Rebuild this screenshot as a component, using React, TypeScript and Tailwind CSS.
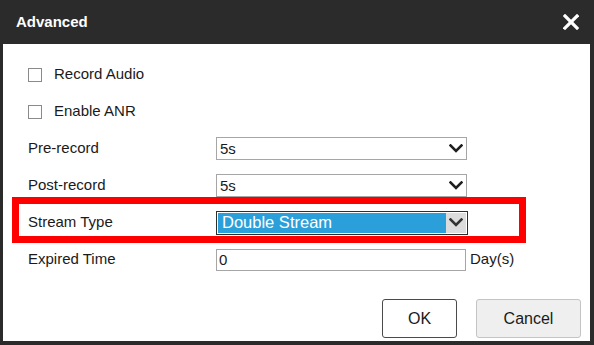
import React from 'react'

const Chevron = ({ color = '#1f1f1f' }: { color?: string }) => (
  <svg width="14" height="9" viewBox="0 0 14 9" className="shrink-0">
    <polyline
      points="1.5,1.5 7,7 12.5,1.5"
      fill="none"
      stroke={color}
      strokeWidth="2.6"
      strokeLinecap="square"
    />
  </svg>
)

const CloseIcon = () => (
  <svg width="16" height="16" viewBox="0 0 16 16">
    <line x1="2" y1="2" x2="14" y2="14" stroke="#fff" strokeWidth="3.2" strokeLinecap="square" />
    <line x1="14" y1="2" x2="2" y2="14" stroke="#fff" strokeWidth="3.2" strokeLinecap="square" />
  </svg>
)

/**
 * Checkbox row, e.g. Record Audio
 */
const CheckRow = ({ label }: { label: string }) => (
  <div className="h-[37px] flex items-center">
    <span className="w-[14px] h-[14px] border border-[#8a8a8a] bg-white" />
    <span className="ml-[12px] text-[15px] text-[#1a1a1a]">{label}</span>
  </div>
)

/**
 * Label + select row
 */
const SelectRow = ({ label, value }: { label: string; value: string }) => (
  <div className="h-[37px] flex items-center">
    <span className="w-[188px] text-[15px] text-[#1a1a1a]">{label}</span>
    <div className="w-[251px] h-[23px] border border-[#a6a6a6] bg-white flex items-center justify-between pl-[3px] pr-[3px]">
      <span className="text-[15px] text-[#1a1a1a] leading-none">{value}</span>
      <Chevron />
    </div>
  </div>
)

export default function App() {
  return (
    <div className="w-[594px] h-[345px] bg-[#2b2b2b] flex flex-col pl-[3px] pr-[4px] pb-[4px] font-['Liberation_Sans',Arial,sans-serif]">
      {/* Header */}
      <div className="h-[44px] shrink-0 flex items-center justify-between pl-[13px] pr-[11px]">
        <span className="text-white font-bold text-[15px]">Advanced</span>
        <CloseIcon />
      </div>

      {/* Body */}
      <div className="flex-1 bg-white relative pl-[25px] pt-[12px]">
        <CheckRow label="Record Audio" />
        <CheckRow label="Enable ANR" />
        <SelectRow label="Pre-record" value="5s" />
        <SelectRow label="Post-record" value="5s" />

        {/* Stream Type */}
        <div className="h-[37px] flex items-center">
          <span className="w-[188px] text-[15px] text-[#1a1a1a]">Stream Type</span>
          <div className="w-[252px] h-[24px] border border-[#2e2e2e] bg-white flex p-[1px]">
            <div className="flex-1 bg-[#2b9fd9] flex items-center pl-[4px]">
              <span className="text-white text-[16.5px] leading-none">Double Stream</span>
            </div>
            <div className="w-[20px] bg-[#dcdcdc] flex items-center justify-center">
              <Chevron color="#333333" />
            </div>
          </div>
        </div>

        {/* Expired Time */}
        <div className="h-[37px] flex items-center">
          <span className="w-[188px] text-[15px] text-[#1a1a1a]">Expired Time</span>
          <div className="w-[250px] h-[22px] border border-[#a6a6a6] bg-white flex items-center pl-[2px]">
            <span className="text-[15px] text-[#1a1a1a] leading-none">0</span>
          </div>
          <span className="ml-[4px] text-[15px] text-[#1a1a1a]">Day(s)</span>
        </div>

        {/* Buttons */}
        <div className="mt-[21px] flex justify-end gap-[19px] pr-[9px]">
          <button className="w-[75px] h-[39px] rounded-[3px] border border-[#4a4a4a] bg-white text-[16px] text-[#1a1a1a]">
            OK
          </button>
          <button className="w-[105px] h-[39px] rounded-[3px] border border-[#c4c4c4] bg-[#efefef] text-[16px] text-[#1a1a1a]">
            Cancel
          </button>
        </div>

        {/* Red highlight annotation */}
        <div className="absolute left-[9px] top-[153px] w-[514px] h-[46px] border-[7px] border-[#ff0000] pointer-events-none" />
      </div>
    </div>
  )
}
